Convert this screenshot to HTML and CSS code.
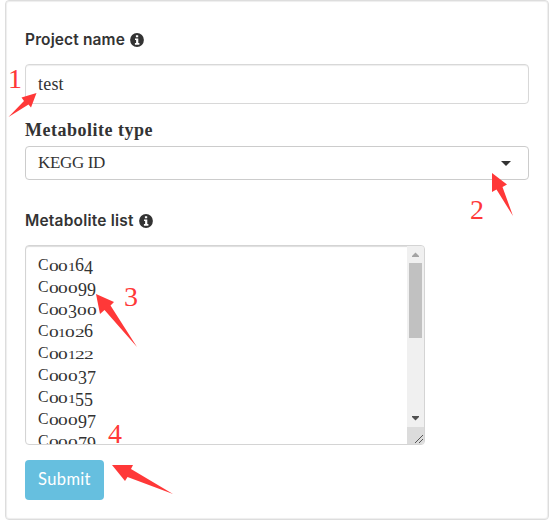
FILE: index.html
```
<!DOCTYPE html>
<html lang="en">
<head>
<meta charset="utf-8">
<title>Project submission</title>
<link rel="stylesheet" href="styles.css">
</head>
<body>
<form class="panel">
  <div class="label project"><span class="project-text">Project name</span>
    <svg class="info" viewBox="0 0 14 14"><circle cx="7" cy="7" r="6.900"/><path d="M5.900 2.200h2.300v2H5.900zM5 5.400h3.300v4.700H9.400v1.600H4.900v-1.600h1.200V7H5z"/></svg>
  </div>
  <div class="field name"><span class="test">test</span></div>
  <div class="label type">Metabolite type</div>
  <div class="field select"><span>KEGG ID</span><i class="caret"></i></div>
  <div class="label list"><span class="list-text">Metabolite list</span>
    <svg class="info" viewBox="0 0 14 14"><circle cx="7" cy="7" r="6.900"/><path d="M5.900 2.200h2.300v2H5.900zM5 5.400h3.300v4.700H9.400v1.600H4.900v-1.600h1.200V7H5z"/></svg>
  </div>
  <div class="area">
    <div class="codes" id="codes"></div>
    <div class="scrollbar">
      <svg class="step" viewBox="0 0 17 17"><path fill="#a3a3a3" d="M5 11V10L8.500 6.500L12 10v1z"/></svg>
      <div class="thumb"></div>
      <svg class="step down" viewBox="0 0 17 17"><path fill="#505050" d="M5 6h7v1L8.500 10.500L5 7z"/></svg>
      <svg class="grip" viewBox="0 0 17 17"><path d="M8 16l8-8M12 16l4-4" stroke="#555" fill="none"/></svg>
    </div>
  </div>
  <button type="button" class="submit"><span>Submit</span></button>
</form>
<svg class="notes" viewBox="0 0 550 521">
  <g class="arrows">
    <path d="M36.500 93L31 107.500L28.500 104.500L8.500 117L24 101L21.500 97.500z"/>
    <path d="M492 173L507 184.500L502.500 187L513 216L496.500 189.500L492 192z"/>
    <path d="M96 294L114 302L110.500 305.500L137 347L104.500 310L100 314z"/>
    <path d="M112 465L133 465L131 469L173 494L127.500 477L125 481z"/>
  </g>
  <text x="8" y="88">1</text><text x="470" y="219">2</text><text x="124" y="306">3</text><text x="108" y="443">4</text>
</svg>
<script src="codes.js"></script>
</body>
</html>
```
FILE: codes.js
```
const codes = ['C00164', 'C00099', 'C00300', 'C01026', 'C00122', 'C00037', 'C00155', 'C00097', 'C00079'];
const list = document.getElementById('codes');
// Old-style numerals: 0-2 sit at x-height, 3, 4, 5, 7 and 9 hang below the baseline.
for (const code of codes) {
  const row = document.createElement('div');
  row.className = 'code';
  for (const ch of code) {
    const glyph = document.createElement('span');
    glyph.className = 'g g' + ch;
    if ('34579'.includes(ch)) glyph.classList.add('hang');
    if ('012'.includes(ch)) glyph.classList.add('low');
    glyph.textContent = ch;
    row.append(glyph);
  }
  list.append(row);
}
```
FILE: styles.css
```
* { box-sizing: border-box; }
body { margin: 0; width: 550px; height: 521px; overflow: hidden; position: relative; background: #fff; color: #333; font: 17px "Liberation Serif", serif; }
.panel { margin: 0 0 0 5px; width: 544px; height: 520px; padding: 28px 19px 0; border: 1px solid #ddd; border-radius: 4px; box-shadow: inset 0 0 1px 1px #eee; }
.label { display: flex; align-items: center; height: 22px; font: 600 16px/22px Inter, sans-serif; white-space: nowrap; }
.info { width: 14px; height: 14px; margin-left: 5px; }
.info circle { fill: #333; }
.info path { fill: #fff; }
.project-text { width: 100px; font-size: 15.500px; letter-spacing: .13px; }
.list-text { width: 109px; font-size: 15.500px; letter-spacing: .2px; }
.project { padding-bottom: 1px; }
.list .info { margin-top: -1px; }
.field { display: flex; align-items: center; width: 504px; padding: 0 12px; border: 1px solid #ccc; border-radius: 4px; }
.name { height: 40px; margin-top: 13px; padding-top: 1px; border-color: #d8d8d8; box-shadow: inset 0 1px 1px #eee; font-size: 18px; letter-spacing: .2px; }
.type { margin-top: 15px; font: bold 18px/22px "Liberation Serif", serif; letter-spacing: .5px; }
.select { height: 34px; margin-top: 5px; justify-content: space-between; font-size: 17px; letter-spacing: -.35px; }
.caret { margin-right: 5px; border: 5px solid transparent; border-top-color: #333; border-bottom: 0; }
.list { margin-top: 30px; }
.area { display: flex; justify-content: space-between; width: 400px; height: 200px; margin-top: 13px; border: 1px solid #d4d4d4; border-radius: 4px; box-shadow: inset 0 1px 1px #ddd; overflow: hidden; }
.codes { padding: 8px 12px; }
.code { display: flex; height: 22px; line-height: 22px; }
.g { display: block; width: 9px; font-size: 18px; transform-origin: 0 17px; }
.gC { width: 10.500px; font-size: 17px; transform: scaleX(.93); }
.g0 { width: 9.800px; }
.g1 { width: 7px; }
.low { transform: scale(1.08, .74); }
.g1.low { transform: scale(.85, .74); }
.hang { transform: translateY(3px); }
.scrollbar { display: flex; flex-direction: column; width: 17px; background: #f0f0f0; }
.step, .grip { width: 17px; height: 17px; flex: none; }
.thumb { width: 13px; height: 75px; margin-left: 2px; background: #c1c1c1; }
.down { margin-top: auto; }
.grip { background: #dcdcdc; }
.submit { display: block; width: 79px; height: 40px; margin-top: 15px; padding: 0 0 2px; border: 0; border-radius: 4px; background: #66bfdf; color: #fff; font: 16.500px Lato, sans-serif; letter-spacing: .35px; }
.notes { position: absolute; inset: 0; width: 550px; height: 521px; fill: #ff3838; }
.notes text { font: 28px "Liberation Serif", serif; }
```
